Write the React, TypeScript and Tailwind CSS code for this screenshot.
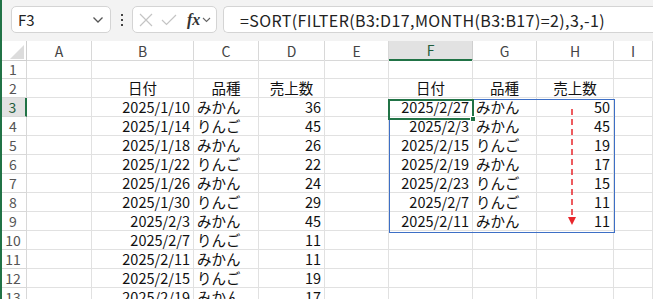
import React from "react"

type Align = "l" | "r" | "c"
type Cell = { v: string; a: Align } | null

const COLS = ["A", "B", "C", "D", "E", "F", "G", "H", "I"]

const SOURCE: [string, string, string][] = [
  ["2025/1/10", "みかん", "36"],
  ["2025/1/14", "りんご", "45"],
  ["2025/1/18", "みかん", "26"],
  ["2025/1/22", "りんご", "22"],
  ["2025/1/26", "みかん", "24"],
  ["2025/1/30", "りんご", "29"],
  ["2025/2/3", "みかん", "45"],
  ["2025/2/7", "りんご", "11"],
  ["2025/2/11", "みかん", "11"],
  ["2025/2/15", "りんご", "19"],
  ["2025/2/19", "みかん", "17"],
]

const SORTED: [string, string, string][] = [
  ["2025/2/27", "みかん", "50"],
  ["2025/2/3", "みかん", "45"],
  ["2025/2/15", "りんご", "19"],
  ["2025/2/19", "みかん", "17"],
  ["2025/2/23", "りんご", "15"],
  ["2025/2/7", "りんご", "11"],
  ["2025/2/11", "みかん", "11"],
]

function buildRows(): Cell[][] {
  const rows: Cell[][] = []
  rows.push(Array(9).fill(null))
  const head: Cell[] = Array(9).fill(null)
  head[1] = { v: "日付", a: "c" }
  head[2] = { v: "品種", a: "c" }
  head[3] = { v: "売上数", a: "c" }
  head[5] = { v: "日付", a: "c" }
  head[6] = { v: "品種", a: "c" }
  head[7] = { v: "売上数", a: "c" }
  rows.push(head)
  for (let i = 0; i < SOURCE.length; i++) {
    const r: Cell[] = Array(9).fill(null)
    r[1] = { v: SOURCE[i][0], a: "r" }
    r[2] = { v: SOURCE[i][1], a: "l" }
    r[3] = { v: SOURCE[i][2], a: "r" }
    if (SORTED[i]) {
      r[5] = { v: SORTED[i][0], a: "r" }
      r[6] = { v: SORTED[i][1], a: "l" }
      r[7] = { v: SORTED[i][2], a: "r" }
    }
    rows.push(r)
  }
  return rows
}

const alignClass: Record<Align, string> = {
  l: "justify-start pl-[3px]",
  r: "justify-end pr-[3px]",
  c: "justify-center",
}

function Toolbar() {
  return (
    <div className="h-[41px] bg-[#f3f3f3] flex items-start pt-[6px] pl-[11px] gap-[6px]">
      <div className="w-[100px] h-[27px] bg-white border border-[#d4d4d4] rounded-[5px] flex items-center justify-between pl-[6px] pr-[6px]">
        <span className="text-[15px] leading-none text-[#222]">F3</span>
        <svg width="12" height="8" viewBox="0 0 12 8">
          <path d="M1.5 1.5 L6 6 L10.5 1.5" fill="none" stroke="#555" strokeWidth="1.3" />
        </svg>
      </div>
      <div className="w-[9px] h-[27px] flex flex-col items-center justify-center gap-[3px]">
        <span className="w-[2px] h-[2px] bg-[#444]" />
        <span className="w-[2px] h-[2px] bg-[#444]" />
        <span className="w-[2px] h-[2px] bg-[#444]" />
      </div>
      <div className="w-[85px] h-[27px] bg-white border border-[#d4d4d4] rounded-[5px] flex items-center pl-[6px] gap-[8px]">
        <svg width="14" height="14" viewBox="0 0 14 14">
          <path d="M1 1 L13 13 M13 1 L1 13" stroke="#c4c4c4" strokeWidth="1.2" />
        </svg>
        <svg width="16" height="12" viewBox="0 0 16 12">
          <path d="M1 6 L5.5 10.5 L15 1" fill="none" stroke="#c4c4c4" strokeWidth="1.2" />
        </svg>
        <span className="flex items-center gap-[2px] ml-[2px]">
          <span className="text-[16px] italic font-bold text-[#333] leading-none [font-family:'Liberation_Serif',serif]">fx</span>
          <svg width="9" height="6" viewBox="0 0 9 6">
            <path d="M1 1 L4.5 4.5 L8 1" fill="none" stroke="#666" strokeWidth="1.1" />
          </svg>
        </span>
      </div>
      <div className="flex-1 h-[27px] bg-white border border-r-0 border-[#d4d4d4] rounded-l-[5px] flex items-center pl-[16px]">
        <span className="text-[16px] leading-none text-[#222] tracking-[0.4px] whitespace-nowrap">=SORT(FILTER(B3:D17,MONTH(B3:B17)=2),3,-1)</span>
      </div>
    </div>
  )
}

function Sheet() {
  const rows = buildRows()
  return (
    <div className="relative leading-none">
      <div className="grid grid-cols-[27px_65px_102px_65px_66px_64px_84px_64px_77px_39px] auto-rows-[19px]">
        <div className="h-[20px] border-r border-b border-[#cfcfcf] bg-white relative">
          <svg className="absolute left-[10px] top-[4px]" width="14" height="14" viewBox="0 0 14 14">
            <path d="M14 0 L14 14 L0 14 Z" fill="#dcdcdc" />
          </svg>
        </div>
        {COLS.map((c) => (
          <div
            key={c}
            className={
              c === "F"
                ? "h-[20px] bg-[#e2e2e2] border-r border-[#cfcfcf] border-b-2 border-b-[#217346] flex items-center justify-center text-[14px] text-[#1f5c3a]"
                : "h-[20px] bg-white border-r border-b border-[#d8d8d8] flex items-center justify-center text-[14px] text-[#444]"
            }
          >
            {c}
          </div>
        ))}
        {rows.map((r, i) => (
          <React.Fragment key={i}>
            <div
              className={
                i === 2
                  ? "bg-[#e2e2e2] border-b border-[#d8d8d8] border-r-2 border-r-[#217346] flex items-center justify-center text-[14px] text-[#1f5c3a]"
                  : "bg-white border-r border-b border-[#d8d8d8] flex items-center justify-center text-[14px] text-[#555]"
              }
            >
              {i + 1}
            </div>
            {r.map((cell, j) => (
              <div
                key={j}
                className={
                  "border-r border-b border-[#e1e1e1] flex items-center whitespace-nowrap text-[14.5px] text-[#111] " +
                  (cell ? alignClass[cell.a] : "")
                }
              >
                {cell ? <span>{cell.v}</span> : null}
              </div>
            ))}
          </React.Fragment>
        ))}
      </div>
      {/* spill range border */}
      <div className="absolute left-[389px] top-[58px] w-[226px] h-[134px] border border-[#3d6fc6] pointer-events-none" />
      {/* active cell */}
      <div className="absolute left-[388px] top-[58px] w-[86px] h-[21px] border-2 border-[#217346] pointer-events-none" />
      <div className="absolute left-[470px] top-[75px] w-[6px] h-[6px] bg-[#217346] border border-white pointer-events-none" />
      {/* red arrow */}
      <svg className="absolute left-[567px] top-[68px] pointer-events-none" width="10" height="118" viewBox="0 0 10 118">
        <line x1="5" y1="0" x2="5" y2="108" stroke="#e8262b" strokeWidth="1.5" strokeDasharray="6 4" />
        <path d="M1 108 L9 108 L5 116 Z" fill="#e8262b" />
      </svg>
    </div>
  )
}

export default function App() {
  return (
    <div className="w-[653px] h-[299px] overflow-hidden bg-white border-l-2 border-[#217346] [font-family:'Noto_Sans_CJK_JP','Noto_Sans',sans-serif]">
      <div className="-ml-[2px]">
        <Toolbar />
        <Sheet />
      </div>
    </div>
  )
}
